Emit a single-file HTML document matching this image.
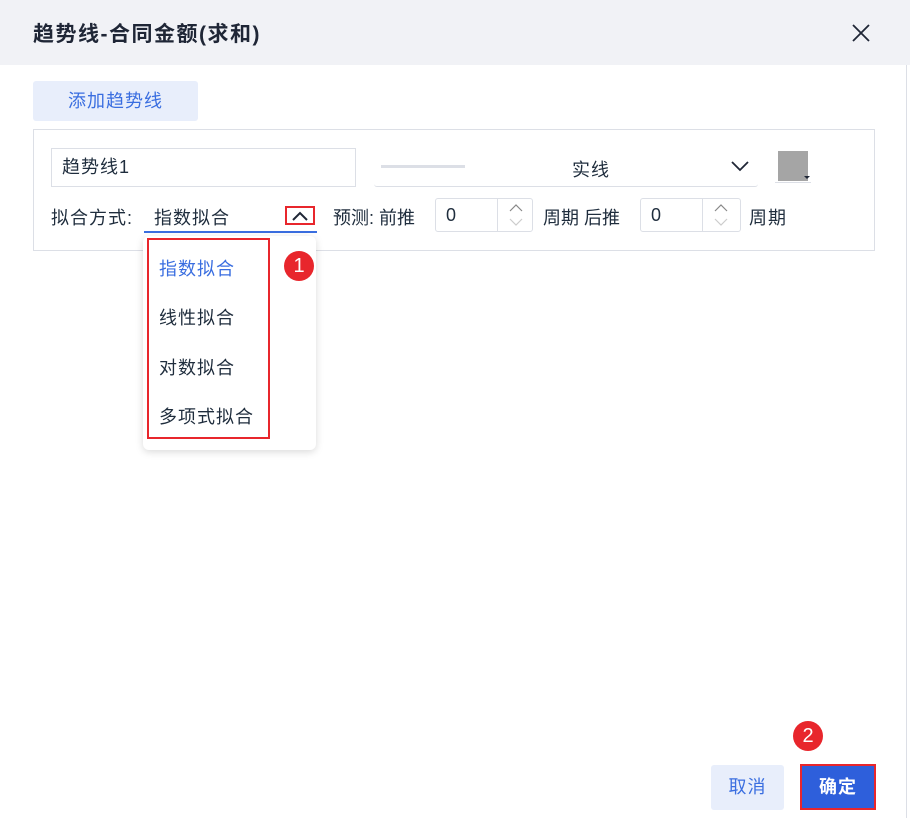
<!DOCTYPE html>
<html><head><meta charset="utf-8"><style>
*{box-sizing:border-box;margin:0;padding:0}
body{width:910px;height:818px;background:#fff;font-family:"Liberation Sans","Noto Sans CJK SC",sans-serif;color:#1f2d3d;position:relative;overflow:hidden;font-size:18px;letter-spacing:1px}
.a{position:absolute}
</style></head><body>
<div class="a" style="left:0;top:0;width:910px;height:65px;background:#f1f2f6"></div>
<div class="a" style="left:33px;top:18px;font-size:21px;font-weight:bold;color:#1f2636;letter-spacing:1.5px">趋势线-合同金额(求和)</div>
<svg class="a" style="left:851px;top:23px" width="20" height="20"><path d="M2 2L18 18M18 2L2 18" stroke="#1f2636" stroke-width="1.8"/></svg>
<div class="a" style="left:33px;top:81px;width:165px;height:40px;background:#e8eefb;border-radius:3px;color:#3a6ee0;line-height:40px;text-align:center">添加趋势线</div>
<div class="a" style="left:33px;top:129px;width:842px;height:122px;border:1px solid #dcdfe6"></div>
<div class="a" style="left:51px;top:148px;width:305px;height:39px;border:1px solid #dcdfe6;padding-left:10px;line-height:37px">趋势线1</div>
<div class="a" style="left:374px;top:148px;width:384px;height:39px;border-bottom:1px solid #dcdfe6;border-radius:3px"></div>
<div class="a" style="left:381px;top:165px;width:84px;height:3px;background:#dcdfe6"></div>
<div class="a" style="left:572px;top:156px">实线</div>
<svg class="a" style="left:731px;top:160px" width="18" height="12"><path d="M1 2L9 10L17 2" stroke="#1f2636" stroke-width="1.8" fill="none"/></svg>
<div class="a" style="left:778px;top:151px;width:30px;height:30px;background:#a5a5a5"></div>
<div class="a" style="left:775px;top:182px;width:36px;height:1px;background:#dcdfe6"></div>
<div class="a" style="left:804px;top:176px;border-left:3px solid transparent;border-right:3px solid transparent;border-top:3px solid #1f2636"></div>
<div class="a" style="left:51px;top:204px">拟合方式:</div>
<div class="a" style="left:154px;top:204px">指数拟合</div>
<div class="a" style="left:144px;top:231px;width:173px;height:2px;background:#3a6ee0"></div>
<div class="a" style="left:285px;top:206px;width:30px;height:19px;border:2px solid #e8262c"></div>
<svg class="a" style="left:291px;top:210px" width="18" height="12"><path d="M2 10L9 3L16 10" stroke="#1f2636" stroke-width="2" fill="none"/></svg>
<div class="a" style="left:333px;top:204px;letter-spacing:0">预测: 前推</div>
<div class="a" style="left:435px;top:198px;width:98px;height:34px;border:1px solid #dcdfe6;border-radius:3px;padding-left:10px;line-height:32px">0</div>
<div class="a" style="left:497px;top:199px;width:1px;height:32px;background:#dcdfe6"></div>
<svg class="a" style="left:507px;top:202px" width="18" height="26"><path d="M3 9L9 3L15 9" stroke="#888" stroke-width="1.2" fill="none"/><path d="M3 17L9 23L15 17" stroke="#ccc" stroke-width="1.2" fill="none"/></svg>
<div class="a" style="left:543px;top:204px;letter-spacing:0">周期 后推</div>
<div class="a" style="left:640px;top:198px;width:101px;height:34px;border:1px solid #dcdfe6;border-radius:3px;padding-left:10px;line-height:32px">0</div>
<div class="a" style="left:702px;top:199px;width:1px;height:32px;background:#dcdfe6"></div>
<svg class="a" style="left:712px;top:202px" width="18" height="26"><path d="M3 9L9 3L15 9" stroke="#888" stroke-width="1.2" fill="none"/><path d="M3 17L9 23L15 17" stroke="#ccc" stroke-width="1.2" fill="none"/></svg>
<div class="a" style="left:749px;top:204px">周期</div>
<div class="a" style="left:143px;top:236px;width:173px;height:214px;background:#fff;border-radius:6px;box-shadow:0 2px 8px rgba(0,0,0,.15)"></div>
<div class="a" style="left:147px;top:238px;width:123px;height:201px;border:2px solid #e8262c"></div>
<div class="a" style="left:159px;top:257px;color:#3a6ee0;line-height:24px">指数拟合</div>
<div class="a" style="left:159px;top:306px;line-height:24px">线性拟合</div>
<div class="a" style="left:159px;top:356px;line-height:24px">对数拟合</div>
<div class="a" style="left:159px;top:405px;line-height:24px">多项式拟合</div>
<div class="a" style="left:284px;top:251px;width:30px;height:30px;border-radius:50%;background:#e8262c;color:#fff;font-size:20px;text-align:center;line-height:30px;letter-spacing:0">1</div>
<div class="a" style="left:793px;top:721px;width:30px;height:30px;border-radius:50%;background:#e8262c;color:#fff;font-size:20px;text-align:center;line-height:30px;letter-spacing:0">2</div>
<div class="a" style="left:711px;top:765px;width:73px;height:45px;background:#e8eefb;border-radius:3px;color:#3a6ee0;text-align:center;line-height:45px">取消</div>
<div class="a" style="left:800px;top:764px;width:76px;height:46px;background:#2e5fdb;border:2px solid #e8262c;color:#fff;font-weight:bold;text-align:center;line-height:42px">确定</div>
<div class="a" style="left:906px;top:65px;width:1px;height:753px;background:#dcdfe6"></div>
</body></html>
